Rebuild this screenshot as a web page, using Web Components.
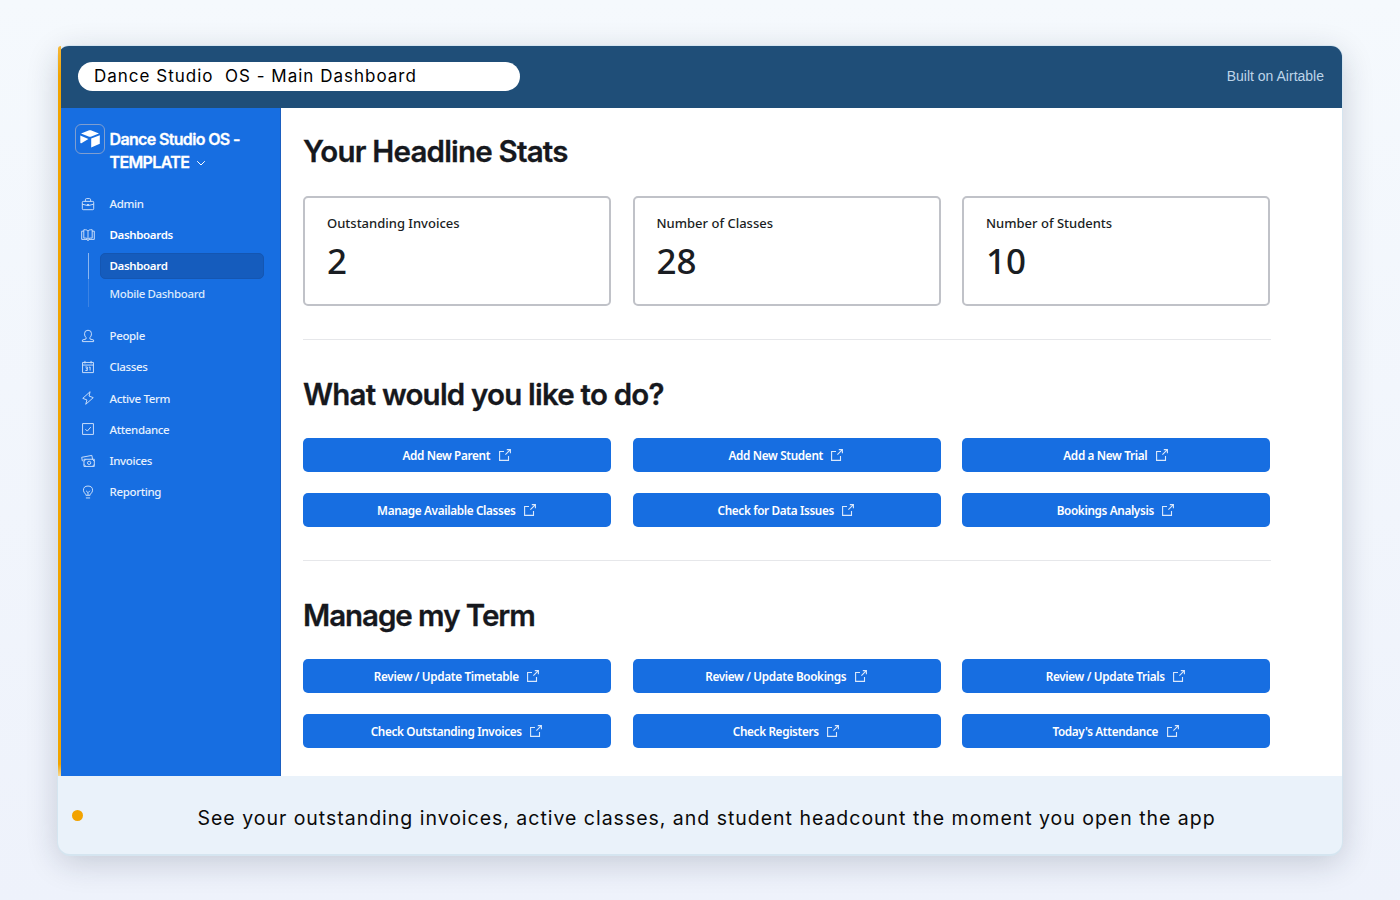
<!DOCTYPE html>
<html lang="en">
<head>
	<meta charset="utf-8">
	<meta name="viewport" content="width=device-width, initial-scale=1">
	<title>Dance Studio OS - Main Dashboard</title>
	<style>
		body {
			margin: 0;
			height: 900px;
			overflow: hidden;
			box-sizing: border-box;
			padding: 46px 58px 0;
			font-family: "Open Sans", "Noto Sans", sans-serif;
			background: linear-gradient(180deg, #f5f9fd 0%, #eef2fb 100%);
		}
	</style>
</head>
<body>
	<app-window>
		<title-bar slot="top" note="Built on Airtable">Dance Studio  OS - Main Dashboard</title-bar>
		<side-bar slot="side">
			<nav-item icon="case">Admin</nav-item>
			<nav-item icon="book" strong>Dashboards</nav-item>
			<nav-group>
				<nav-sub active>Dashboard</nav-sub>
				<nav-sub>Mobile Dashboard</nav-sub>
			</nav-group>
			<nav-item icon="person">People</nav-item>
			<nav-item icon="calendar">Classes</nav-item>
			<nav-item icon="bolt">Active Term</nav-item>
			<nav-item icon="check">Attendance</nav-item>
			<nav-item icon="money">Invoices</nav-item>
			<nav-item icon="bulb">Reporting</nav-item>
		</side-bar>
		<page-section heading="Your Headline Stats" first>
			<stat-card value="2">Outstanding Invoices</stat-card>
			<stat-card value="28">Number of Classes</stat-card>
			<stat-card value="10">Number of Students</stat-card>
		</page-section>
		<page-section heading="What would you like to do?">
			<link-button>Add New Parent</link-button>
			<link-button>Add New Student</link-button>
			<link-button>Add a New Trial</link-button>
			<link-button>Manage Available Classes</link-button>
			<link-button>Check for Data Issues</link-button>
			<link-button>Bookings Analysis</link-button>
		</page-section>
		<page-section heading="Manage my Term" last>
			<link-button>Review / Update Timetable</link-button>
			<link-button>Review / Update Bookings</link-button>
			<link-button>Review / Update Trials</link-button>
			<link-button>Check Outstanding Invoices</link-button>
			<link-button>Check Registers</link-button>
			<link-button>Today's Attendance</link-button>
		</page-section>
		<caption-bar slot="bottom">See your outstanding invoices, active classes, and student headcount the moment you open the app</caption-bar>
	</app-window>
	<script>
	const define = (name, render) => customElements.define(name, class extends HTMLElement {
		connectedCallback() {
			this.attachShadow({mode: 'open'});
			this.shadowRoot.innerHTML = render(this);
		}
	});

	// 16x16 line icons
	const icons = {
		case: '<rect x="1.5" y="5" width="13" height="9.5" rx="1"/><path d="M5 5V3.2Q5 1.8 6.4 1.8H9.6Q11 1.8 11 3.2V5M1.5 8.2Q8 11.6 14.5 8.2M6.8 8.6H9.2"/>',
		book: '<path d="M8 3.6Q7 2 5 2H3.2V11.5H5.2Q7.4 11.5 8 13Q8.6 11.5 10.8 11.5H12.8V2H11Q9 2 8 3.6V13M3.2 3.6H.8V13H5.8Q7.4 13 8 14.6Q8.6 13 10.2 13H15.2V3.6H12.8"/>',
		person: '<path d="M5.8 9.8Q4 8.4 4 5.4Q4 1.4 8 1.4T12 5.4Q12 8.4 10.2 9.8V11.4L14.4 12.6V14.4H1.6V12.6L5.8 11.4Z"/>',
		calendar: '<path d="M1.8 2.8H14.2V14.4H1.8ZM1.8 5.8H14.2M4.5 1V4M11.5 1V4M5 8H7.2V12H5M5.6 10H7.2M9 8.4L10.4 8V12"/>',
		bolt: '<path d="M10.4 .8L2 8.4L6.8 10.2L5.4 15.2L14 7.6L9.2 5.8Z"/>',
		check: '<path d="M1.8 1.8H14.2V14.2H1.8ZM5 8.2L7.2 10.4L11.2 5.8"/>',
		money: '<path d="M3.4 6H15.2V14.2H3.4ZM3.4 8.4L5.6 6M15.2 8.4L13 6M3.4 11.8L5.6 14.2M15.2 11.8L13 14.2M13.2 6L12.4 1.6L.8 3.8L1.6 8.2"/><circle cx="9.3" cy="10.1" r="1.9"/>',
		bulb: '<path d="M5.6 11.8V10.6Q2.8 9 2.8 6Q2.8 1.2 8 1.2T13.2 6Q13.2 9 10.4 10.6V11.8ZM5.6 14.8H10.4M8 11.8V8.8L5.8 6.6M8 8.8L10.2 6.6"/>'
	};

	define('app-window', () => `
		<style>
			:host {
				display: flex;
				flex-direction: column;
				height: 808px;
				border-radius: 12px;
				background: #eaf2fa;
				box-shadow: 0 0 0 1px #d5e5f0, 0 2px 0 #d5e5f0, 0 8px 32px rgba(25, 35, 60, .2);
			}
			.middle { display: flex; height: 668px; background: #fff; }
			.accent { width: 3px; margin-top: -62px; background: linear-gradient(#f5b83a 0, #f2a300 30px, #f2a300 718px, #f7d793 730px); border-radius: 12px 0 0 0; }
			main { padding: 0 0 0 22px; width: 968px; }
		</style>
		<slot name="top"></slot>
		<div class="middle">
			<div class="accent"></div>
			<slot name="side"></slot>
			<main><slot></slot></main>
		</div>
		<slot name="bottom"></slot>
	`);

	define('title-bar', el => `
		<style>
			:host {
				display: flex;
				align-items: center;
				justify-content: space-between;
				height: 62px;
				padding: 0 18px 0 20px;
				box-sizing: border-box;
				border-radius: 11px 11px 0 0;
				background: #1f4e78;
			}
			.name {
				width: 442px;
				height: 29px;
				margin-bottom: 1px;
				padding-left: 16px;
				box-sizing: border-box;
				border-radius: 15px;
				background: #fff;
				color: #000;
				font: 17px/28px Inter, sans-serif;
				letter-spacing: 1px;
				white-space: pre;
			}
			.note {
				font: 14px "Liberation Sans", sans-serif;
				color: #bdd4e8;
				margin-bottom: 2px;
			}
		</style>
		<div class="name"><slot></slot></div>
		<div class="note">${el.getAttribute('note')}</div>
	`);

	define('side-bar', () => `
		<style>
			:host {
				display: block;
				width: 220px;
				box-sizing: border-box;
				padding: 16px 0 0 13px;
				border-right: 1px solid #1b5fc0;
				background: #176ee1;
				color: #fff;
			}
			.brand { display: flex; gap: 5px; height: 64px; }
			.logo {
				width: 28px;
				height: 28px;
				margin-left: .5px;
				border: 1px solid #7f9ed0;
				border-radius: 6px;
			}
			h1 {
				margin: 4px 0 0;
				font: 600 16px/23px Inter, sans-serif;
				letter-spacing: -.65px;
				-webkit-text-stroke: .3px;
			}
			h1 svg { margin-left: 3px; }
		</style>
		<div class="brand">
			<svg class="logo" viewBox="0 0 28 28" fill="#fff">
				<path d="M5 8.6L13.2 5.3Q14 5 14.8 5.3L23 8.4L14.8 11.7Q14 12 13.2 11.7Z"/>
				<path d="M15.2 13.6L23.8 10.2V18.8L15.2 22.4Z"/>
				<path d="M4.3 10.6L12.4 14L5.4 18.2Q4.3 18.6 4.3 17.6Z"/>
			</svg>
			<h1>Dance Studio OS -<br>TEMPLATE <svg width="10" height="10" viewBox="0 0 10 10" fill="none" stroke="#fff"><path d="M1.2 3.2L5 7L8.8 3.2"/></svg></h1>
		</div>
		<slot></slot>
	`);

	define('nav-item', el => `
		<style>
			:host {
				display: flex;
				align-items: center;
				gap: 15px;
				height: 31.25px;
				padding-left: 6.5px;
				font: 500 11.5px "Noto Sans", sans-serif;
				letter-spacing: -.35px;
				color: #e6f0fd;
			}
			:host([strong]) { font-weight: 600; color: #fff; }
			svg { width: 14px; height: 14px; fill: none; stroke: #cfe1fa; stroke-width: 1.1; }
		</style>
		<svg viewBox="0 0 16 16">${icons[el.getAttribute('icon')]}</svg>
		<span><slot></slot></span>
	`);

	define('nav-group', () => `
		<style>
			:host {
				display: block;
				margin: 2px 16px 13.5px 13.5px;
				height: 54px;
				border-left: 1px solid;
				border-image: linear-gradient(#8bb6f0 26px, #3b83e4 26px) 1;
				padding-left: 11px;
			}
		</style>
		<slot></slot>
	`);

	define('nav-sub', () => `
		<style>
			:host {
				display: block;
				height: 26px;
				margin-bottom: 2px;
				padding-left: 9px;
				border: 1px solid transparent;
				box-sizing: border-box;
				border-radius: 5px;
				font: 500 11.5px/24px "Noto Sans", sans-serif;
				letter-spacing: -.35px;
				color: #dbe9fc;
			}
			:host([active]) {
				background: #155cbd;
				border-color: #1456b2;
				font-weight: 600;
				color: #fff;
			}
		</style>
		<slot></slot>
	`);

	define('page-section', el => `
		<style>
			:host {
				display: block;
				height: 221px;
				border-bottom: 1px solid #e6e7ea;
				box-sizing: border-box;
			}
			:host([first]) { height: 232px; }
			:host([last]) { border: 0; }
			h2 {
				margin: 0;
				padding-top: 33.5px;
				height: 64.5px;
				font: 600 29.5px/40px Inter, sans-serif;
				letter-spacing: -.8px;
				-webkit-text-stroke: .3px;
				color: #16181d;
			}
			:host([first]) h2 { padding-top: 23px; height: 65px; }
			:host([last]) h2 { letter-spacing: -1.05px; }
			div { display: grid; grid-template-columns: repeat(3, 308px); gap: 21.5px; }
		</style>
		<h2>${el.getAttribute('heading')}</h2>
		<div><slot></slot></div>
	`);

	define('stat-card', el => `
		<style>
			:host {
				display: block;
				height: 110px;
				padding: 16px 22px;
				box-sizing: border-box;
				border: 2px solid #c0c2c8;
				border-radius: 5px;
				color: #1a1d23;
			}
			.label { font: 500 13px/18px "Noto Sans", sans-serif; }
			.value { font: 500 35px/50px "Noto Sans", sans-serif; margin-top: 4px; }
		</style>
		<div class="label"><slot></slot></div>
		<div class="value">${el.getAttribute('value')}</div>
	`);

	define('link-button', () => `
		<style>
			:host {
				display: flex;
				align-items: center;
				justify-content: center;
				gap: 8.5px;
				height: 33.5px;
				padding-right: 1px;
				box-sizing: border-box;
				border-radius: 5px;
				background: #176ee1;
				color: #fff;
				font: 600 11.75px "Noto Sans", sans-serif;
				letter-spacing: -.35px;
			}
			svg { fill: none; stroke: #dbe8fb; stroke-width: 1.1; }
		</style>
		<span><slot></slot></span>
		<svg width="12" height="12" viewBox="0 0 12 12"><path d="M5 2.5H.6V11.4H9.5V7M7.8 .6H11.4V4.2M11.4 .6L6.4 5.6"/></svg>
	`);

	define('caption-bar', () => `
		<style>
			:host {
				display: flex;
				align-items: center;
				height: 78px;
				padding: 1px 0 0 14px;
				box-sizing: border-box;
				border-radius: 0 0 12px 12px;
				font: 19.5px Inter, sans-serif;
				letter-spacing: .98px;
				white-space: nowrap;
				color: #0a0a0a;
			}
			i { width: 11px; height: 11px; border-radius: 50%; background: #f2a300; margin: 0 114.5px 0 0; }
			span { padding-top: 4px; }
		</style>
		<i></i>
		<span><slot></slot></span>
	`);
	</script>
</body>
</html>
